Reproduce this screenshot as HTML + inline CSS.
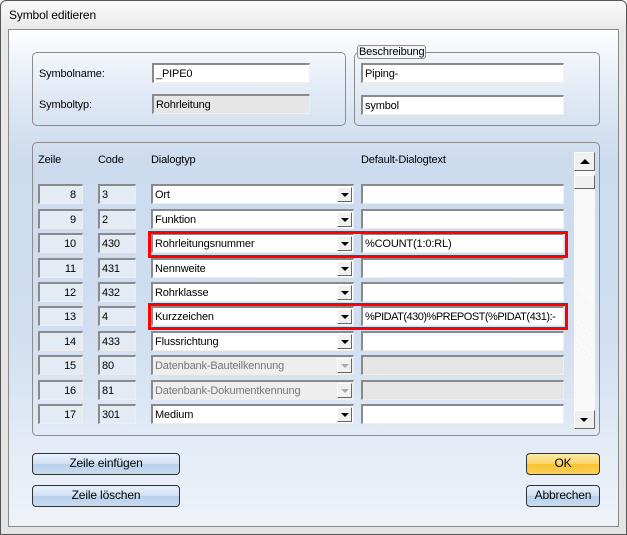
<!DOCTYPE html>
<html><head><meta charset="utf-8"><style>
*{box-sizing:border-box;margin:0;padding:0}
body{width:627px;height:535px;overflow:hidden;font-family:"Liberation Sans",sans-serif;font-size:11px;color:#000;background:#fff;letter-spacing:-0.15px}
.win{position:absolute;left:0;top:0;width:627px;height:535px;border:1px solid #555;border-radius:6px 6px 0 0;background:linear-gradient(#fafafa,#e8e8e8 30px,#e4e4e4)}
.title{position:absolute;left:8px;top:7px;font-size:12px}
.client{position:absolute;left:8px;top:29px;width:611px;height:498px;border:1px solid #8a8a8a;background:linear-gradient(#fdfeff 0px,#dfe8f4 70px,#ccdbee 130px,#d0def0 300px,#e4ecf6 420px,#eef3f9 497px)}
.a{position:absolute}
.grp{position:absolute;border:1px solid #8c8c8c;border-radius:5px}
.tb{position:absolute;height:20px;background:#fff;border-top:2px solid #8a8a8a;border-left:2px solid #8a8a8a;border-right:1px solid #eee;border-bottom:1px solid #eee;padding-left:2px;line-height:18px;white-space:nowrap;overflow:hidden}
.ro{background:#e6e6e6}
.num{text-align:right;padding-right:6px;background:#e3ebf5}
.cd{background:#e3ebf5}
.cb{position:absolute;height:20px;background:#fff;border-top:2px solid #8a8a8a;border-left:2px solid #8a8a8a;border-right:1px solid #eee;border-bottom:1px solid #eee;padding-left:2px;line-height:18px;white-space:nowrap}
.cb .ar{position:absolute;right:1px;top:1px;width:15px;height:15px;background:#f0f0f0;border-right:1px solid #666;border-bottom:1px solid #666;border-left:1px solid #fff;border-top:1px solid #fff}
.cb .ar:after{content:"";position:absolute;left:3px;top:5px;border-left:4px solid transparent;border-right:4px solid transparent;border-top:4px solid #000}
.dis{background:#eee;color:#777}
.dis .ar:after{border-top-color:#aaa}
.red{position:absolute;border:3px solid #f00}
.btn{position:absolute;height:22px;border:1px solid #333;border-radius:4px;background:linear-gradient(#e8f1fb,#cfe0f3 50%,#b8d0ea 51%,#c8dcf0);text-align:center;line-height:19px;font-size:12px}
.ok{background:linear-gradient(#fde9a8,#fbd465 50%,#f9c12f 51%,#fbd060);}
</style></head><body>
<div class="win">
<div class="title">Symbol editieren</div>
</div>
<div class="client"></div>

<div class="grp" style="left:32px;top:52px;width:314px;height:74px"></div>
<div class="a" style="left:39px;top:68px">Symbolname:</div>
<div class="tb" style="left:152px;top:63px;width:158px">_PIPE0</div>
<div class="a" style="left:39px;top:99px">Symboltyp:</div>
<div class="tb ro" style="left:152px;top:94px;width:158px">Rohrleitung</div>

<div class="grp" style="left:354px;top:52px;width:246px;height:74px"></div>
<div class="a" style="left:357px;top:45px;border:1px solid #8c8c8c;border-radius:3px;padding:0 1px;background:#f2f6fb;line-height:12px">Beschreibung</div>
<div class="tb" style="left:361px;top:63px;width:203px">Piping-</div>
<div class="tb" style="left:361px;top:95px;width:203px">symbol</div>

<div class="grp" style="left:32px;top:142px;width:568px;height:294px"></div>
<div class="a" style="left:38px;top:154px">Zeile</div>
<div class="a" style="left:98px;top:154px">Code</div>
<div class="a" style="left:151px;top:154px">Dialogtyp</div>
<div class="a" style="left:361px;top:154px">Default-Dialogtext</div>

<div class="a" style="left:574px;top:152px;width:21px;height:277px;background:repeating-linear-gradient(45deg,#f2f2f2 0 1px,#fff 1px 2px)"></div>
<div class="a" style="left:574px;top:152px;width:21px;height:19px;background:#f0f0f0;border:1px solid #fff;border-right-color:#666;border-bottom-color:#666"><div class="a" style="left:5px;top:6px;border-left:5px solid transparent;border-right:5px solid transparent;border-bottom:5px solid #000"></div></div>
<div class="a" style="left:574px;top:175px;width:21px;height:14px;background:#f0f0f0;border:1px solid #fff;border-right-color:#666;border-bottom-color:#666"></div>
<div class="a" style="left:574px;top:410px;width:21px;height:19px;background:#f0f0f0;border:1px solid #fff;border-right-color:#666;border-bottom-color:#666"><div class="a" style="left:5px;top:7px;border-left:4px solid transparent;border-right:4px solid transparent;border-top:4px solid #000"></div></div>

<div class="tb num" style="left:38px;top:184px;width:45px">8</div><div class="tb cd" style="left:98px;top:184px;width:38px">3</div><div class="cb" style="left:151px;top:184px;width:203px">Ort<div class="ar"></div></div><div class="tb" style="left:361px;top:184px;width:203px"></div>
<div class="tb num" style="left:38px;top:209px;width:45px">9</div><div class="tb cd" style="left:98px;top:209px;width:38px">2</div><div class="cb" style="left:151px;top:209px;width:203px">Funktion<div class="ar"></div></div><div class="tb" style="left:361px;top:209px;width:203px"></div>
<div class="tb num" style="left:38px;top:233px;width:45px">10</div><div class="tb cd" style="left:98px;top:233px;width:38px">430</div><div class="cb" style="left:151px;top:233px;width:203px">Rohrleitungsnummer<div class="ar"></div></div><div class="tb" style="left:361px;top:233px;width:203px">%COUNT(1:0:RL)</div>
<div class="tb num" style="left:38px;top:258px;width:45px">11</div><div class="tb cd" style="left:98px;top:258px;width:38px">431</div><div class="cb" style="left:151px;top:258px;width:203px">Nennweite<div class="ar"></div></div><div class="tb" style="left:361px;top:258px;width:203px"></div>
<div class="tb num" style="left:38px;top:282px;width:45px">12</div><div class="tb cd" style="left:98px;top:282px;width:38px">432</div><div class="cb" style="left:151px;top:282px;width:203px">Rohrklasse<div class="ar"></div></div><div class="tb" style="left:361px;top:282px;width:203px"></div>
<div class="tb num" style="left:38px;top:306px;width:45px">13</div><div class="tb cd" style="left:98px;top:306px;width:38px">4</div><div class="cb" style="left:151px;top:306px;width:203px">Kurzzeichen<div class="ar"></div></div><div class="tb" style="left:361px;top:306px;width:203px;letter-spacing:-0.5px">%PIDAT(430)%PREPOST(%PIDAT(431):-</div>
<div class="tb num" style="left:38px;top:331px;width:45px">14</div><div class="tb cd" style="left:98px;top:331px;width:38px">433</div><div class="cb" style="left:151px;top:331px;width:203px">Flussrichtung<div class="ar"></div></div><div class="tb" style="left:361px;top:331px;width:203px"></div>
<div class="tb num" style="left:38px;top:355px;width:45px">15</div><div class="tb cd" style="left:98px;top:355px;width:38px">80</div><div class="cb dis" style="left:151px;top:355px;width:203px">Datenbank-Bauteilkennung<div class="ar"></div></div><div class="tb ro" style="left:361px;top:355px;width:203px"></div>
<div class="tb num" style="left:38px;top:380px;width:45px">16</div><div class="tb cd" style="left:98px;top:380px;width:38px">81</div><div class="cb dis" style="left:151px;top:380px;width:203px">Datenbank-Dokumentkennung<div class="ar"></div></div><div class="tb ro" style="left:361px;top:380px;width:203px"></div>
<div class="tb num" style="left:38px;top:404px;width:45px">17</div><div class="tb cd" style="left:98px;top:404px;width:38px">301</div><div class="cb" style="left:151px;top:404px;width:203px">Medium<div class="ar"></div></div><div class="tb" style="left:361px;top:404px;width:203px"></div>

<div class="red" style="left:148px;top:231px;width:420px;height:27px"></div>
<div class="red" style="left:148px;top:303px;width:420px;height:27px"></div>

<div class="btn" style="left:32px;top:453px;width:148px">Zeile einfügen</div>
<div class="btn" style="left:32px;top:485px;width:148px">Zeile löschen</div>
<div class="btn ok" style="left:526px;top:453px;width:74px">OK</div>
<div class="btn" style="left:526px;top:485px;width:74px">Abbrechen</div>
</body></html>
